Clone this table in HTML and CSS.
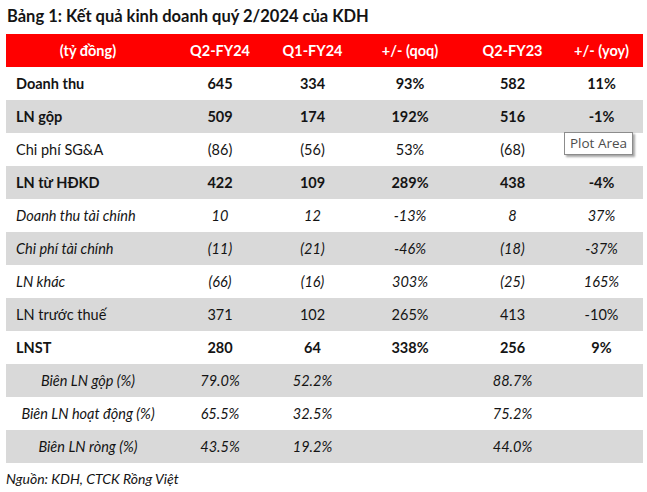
FILE: index.html
```html
<!DOCTYPE html>
<html lang="vi">
<head>
<meta charset="utf-8">
<link rel="stylesheet" href="styles.css">
</head>
<body>
<div class="page">
  <h1 class="title">Bảng 1: Kết quả kinh doanh quý 2/2024 của KDH</h1>
  <div class="table-wrap">
    <table class="kq">
      <colgroup>
        <col class="c-label"><col class="c1"><col class="c2"><col class="c3"><col class="c4"><col class="c5">
      </colgroup>
      <thead>
        <tr><th>(tỷ đồng)</th><th>Q2-FY24</th><th>Q1-FY24</th><th>+/- (qoq)</th><th>Q2-FY23</th><th>+/- (yoy)</th></tr>
      </thead>
      <tbody>
        <tr class="bold"><td class="lbl">Doanh thu</td><td>645</td><td>334</td><td>93%</td><td>582</td><td>11%</td></tr>
        <tr class="bold alt"><td class="lbl">LN gộp</td><td>509</td><td>174</td><td>192%</td><td>516</td><td>-1%</td></tr>
        <tr><td class="lbl">Chi phí SG&amp;A</td><td>(86)</td><td>(56)</td><td>53%</td><td>(68)</td><td></td></tr>
        <tr class="bold alt"><td class="lbl">LN từ HĐKD</td><td>422</td><td>109</td><td>289%</td><td>438</td><td>-4%</td></tr>
        <tr class="ital"><td class="lbl">Doanh thu tài chính</td><td>10</td><td>12</td><td>-13%</td><td>8</td><td>37%</td></tr>
        <tr class="ital alt"><td class="lbl">Chi phí tài chính</td><td>(11)</td><td>(21)</td><td>-46%</td><td>(18)</td><td>-37%</td></tr>
        <tr class="ital"><td class="lbl">LN khác</td><td>(66)</td><td>(16)</td><td>303%</td><td>(25)</td><td>165%</td></tr>
        <tr class="alt"><td class="lbl">LN trước thuế</td><td>371</td><td>102</td><td>265%</td><td>413</td><td>-10%</td></tr>
        <tr class="bold"><td class="lbl">LNST</td><td>280</td><td>64</td><td>338%</td><td>256</td><td>9%</td></tr>
        <tr class="ital alt"><td class="lbl-c">Biên LN gộp (%)</td><td>79.0%</td><td>52.2%</td><td></td><td>88.7%</td><td></td></tr>
        <tr class="ital"><td class="lbl-c">Biên LN hoạt động (%)</td><td>65.5%</td><td>32.5%</td><td></td><td>75.2%</td><td></td></tr>
        <tr class="ital alt"><td class="lbl-c">Biên LN ròng (%)</td><td>43.5%</td><td>19.2%</td><td></td><td>44.0%</td><td></td></tr>
      </tbody>
    </table>
    <div class="tooltip">Plot Area</div>
  </div>
  <p class="source">Nguồn: KDH, CTCK Rồng Việt</p>
</div>
</body>
</html>
```

FILE: styles.css
```css
html, body {
  margin: 0;
  padding: 0;
  background: #ffffff;
}
body {
  font-family: Lato, "Open Sans", sans-serif;
  color: #141414;
  width: 647px;
  height: 492px;
  overflow: hidden;
}
.page {
  padding: 6px 4px 0 6px;
}
.title {
  margin: 0 0 0 1px;
  font-size: 16.5px;
  line-height: 20px;
  font-weight: 700;
  color: #141414;
  height: 28px;
}
.table-wrap {
  position: relative;
  width: 637px;
}
.kq {
  width: 637px;
  border-collapse: collapse;
  table-layout: fixed;
  font-size: 14.5px;
}
.c-label { width: 164px; }
.c1 { width: 100px; }
.c2 { width: 85px; }
.c3 { width: 110px; }
.c4 { width: 95px; }
.c5 { width: 83px; }
.kq th {
  background: #ff0000;
  color: #ffffff;
  font-weight: 700;
  height: 33px;
  padding: 0;
  text-align: center;
}
.kq td {
  height: 33px;
  padding: 0;
  text-align: center;
}
.kq tr.alt td {
  background: #d9d9d9;
}
.kq tr.bold td {
  font-weight: 700;
}
.kq tr.ital td {
  font-style: italic;
}
.kq td.lbl {
  text-align: left;
  padding-left: 10px;
}
.kq td.lbl-c {
  text-align: center;
}
.tooltip {
  position: absolute;
  left: 558px;
  top: 98px;
  width: 69px;
  height: 23px;
  box-sizing: border-box;
  border: 1px solid #8c8c8c;
  background: #ffffff;
  color: #4d4d4d;
  font-family: "Open Sans", "Noto Sans", sans-serif;
  font-size: 13.5px;
  line-height: 21px;
  text-align: center;
  box-shadow: 2px 2px 2px rgba(0, 0, 0, 0.35);
}
.source {
  margin: 7px 0 0 0;
  font-size: 14px;
  font-style: italic;
  color: #141414;
}
```
